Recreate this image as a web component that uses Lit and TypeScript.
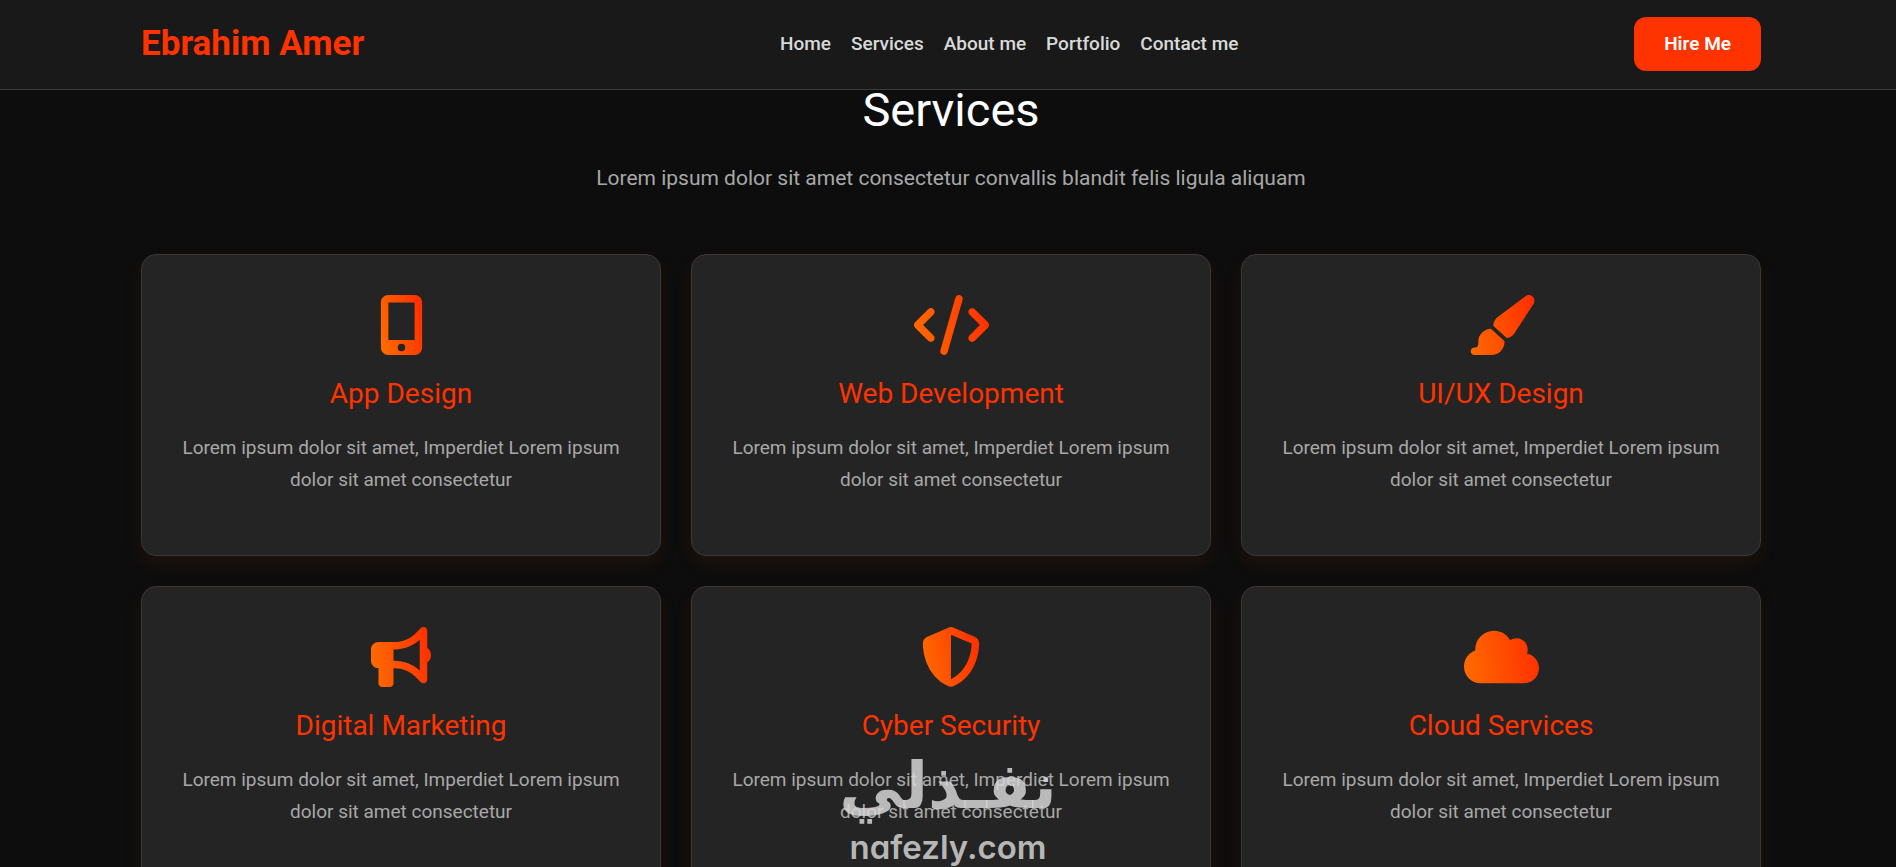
import { LitElement, html, css, svg } from "lit";
import { customElement, property } from "lit/decorators.js";

interface Icon {
  width: number;
  path: string;
}

const ICONS: Record<string, Icon> = {
  mobile: {
    width: 384,
    path: "M16 64C16 28.7 44.7 0 80 0H304c35.3 0 64 28.7 64 64V448c0 35.3-28.7 64-64 64H80c-35.3 0-64-28.7-64-64V64zM224 448a32 32 0 1 0 -64 0 32 32 0 1 0 64 0zM304 64H80V384H304V64z",
  },
  code: {
    width: 640,
    path: "M392.8 1.2c-17-4.9-34.7 5-39.6 22l-128 448c-4.9 17 5 34.7 22 39.6s34.7-5 39.6-22l128-448c4.9-17-5-34.7-22-39.6zm80.6 120.1c-12.5 12.5-12.5 32.8 0 45.3L562.7 256l-89.4 89.4c-12.5 12.5-12.5 32.8 0 45.3s32.8 12.5 45.3 0l112-112c12.5-12.5 12.5-32.8 0-45.3l-112-112c-12.5-12.5-32.8-12.5-45.3 0zm-306.7 0c-12.5-12.5-32.8-12.5-45.3 0l-112 112c-12.5 12.5-12.5 32.8 0 45.3l112 112c12.5 12.5 32.8 12.5 45.3 0s12.5-32.8 0-45.3L77.3 256l89.4-89.4c12.5-12.5 12.5-32.8 0-45.3z",
  },
  brush: {
    width: 576,
    path: "M339.3 367.1c27.3-3.9 51.9-19.4 67.2-42.9L568.2 74.1c12.6-19.5 9.4-45.3-7.6-61.2S517.7-4.4 499.1 9.6L262.4 187.2c-24 18-38.2 46.1-38.4 76.1L339.3 367.1zm-19.6 25.4l-116-104.4C143.9 290.3 96 339.6 96 400c0 3.9 .2 7.8 .6 11.6C98.4 429.1 86.4 448 68.8 448H64c-17.7 0-32 14.3-32 32s14.3 32 32 32H208c61.9 0 112-50.1 112-112c0-2.5-.1-5-.2-7.5z",
  },
  bullhorn: {
    width: 512,
    path: "M480 32c0-12.9-7.8-24.6-19.8-29.6s-25.7-2.2-34.9 6.9L381.7 53c-48 48-113.1 75-181 75H192 160 64c-35.3 0-64 28.7-64 64v96c0 35.3 28.7 64 64 64l0 128c0 17.7 14.3 32 32 32h64c17.7 0 32-14.3 32-32V352l8.7 0c67.9 0 133 27 181 75l43.6 43.6c9.2 9.2 22.9 11.9 34.9 6.9s19.8-16.6 19.8-29.6V300.4c18.6-8.8 32-32.5 32-60.4s-13.4-51.6-32-60.4V32zm-64 76.7V240 371.3C357.2 317.8 280.5 288 200.7 288H192V192h8.7c79.8 0 156.5-29.8 215.3-83.3z",
  },
  shield: {
    width: 512,
    path: "M256 0c4.6 0 9.2 1 13.4 2.9L457.7 82.8c22 9.3 38.4 31 38.3 57.2c-.5 99.2-41.3 280.7-213.6 363.2c-16.7 8-36.1 8-52.8 0C57.3 420.7 16.5 239.2 16 140c-.1-26.2 16.3-47.9 38.3-57.2L242.7 2.9C246.8 1 251.4 0 256 0zm0 66.8V444.8C394 378 431.1 230.1 432 141.4L256 66.8l0 0z",
  },
  cloud: {
    width: 640,
    path: "M0 336c0 79.5 64.5 144 144 144H512c70.7 0 128-57.3 128-128c0-61.9-44-113.6-102.4-125.4c4.1-10.7 6.4-22.4 6.4-34.6c0-53-43-96-96-96c-19.7 0-38.1 6-53.3 16.2C367 64.2 315.3 32 256 32C167.6 32 96 103.6 96 192c0 2.7 .1 5.4 .2 8.1C40.2 219.8 0 273.2 0 336z",
  },
};

const SERVICES = [
  { icon: "mobile", title: "App Design" },
  { icon: "code", title: "Web Development" },
  { icon: "brush", title: "UI/UX Design" },
  { icon: "bullhorn", title: "Digital Marketing" },
  { icon: "shield", title: "Cyber Security" },
  { icon: "cloud", title: "Cloud Services" },
];

const BLURB =
  "Lorem ipsum dolor sit amet, Imperdiet Lorem ipsum dolor sit amet consectetur";

@customElement("service-card")
class ServiceCard extends LitElement {
  static styles = css`
    :host {
      display: flex;
      flex-direction: column;
      align-items: center;
      padding: 40px;
      border: 1px solid #3b3835;
      border-radius: 15px;
      background: #242424;
      box-shadow: 0 8px 20px rgba(255, 102, 0, 0.07);
      text-align: center;
    }
    .icon {
      display: block;
      height: 60px;
    }
    .title {
      margin: 20px 0 19px;
      font-size: 28px;
      font-weight: 400;
      line-height: 38px;
      color: #ff3300;
    }
    .text {
      margin: 0 0 19px;
      font-size: 19px;
      line-height: 32px;
      color: #a8a8a8;
    }
  `;

  @property() icon = "mobile";
  @property() heading = "";
  @property() text = "";

  render() {
    const { width, path } = ICONS[this.icon];
    return html`
      <svg class="icon" viewBox="0 0 ${width} 512" aria-hidden="true">
        <defs>
          ${svg`<linearGradient id="flame" gradientUnits="userSpaceOnUse"
            x1="0" y1="300" x2="${width}" y2="212">
            <stop offset="0" stop-color="#ff6a00"></stop>
            <stop offset="1" stop-color="#ff3000"></stop>
          </linearGradient>`}
        </defs>
        <path fill="url(#flame)" d=${path}></path>
      </svg>
      <h3 class="title">${this.heading}</h3>
      <p class="text">${this.text}</p>
    `;
  }
}

@customElement("app-root")
class AppRoot extends LitElement {
  static styles = css`
    :host {
      position: relative;
      display: block;
      height: 100vh;
      overflow: hidden;
      background: #0d0d0d;
      color: #ffffff;
      font-family: Roboto, "Liberation Sans", sans-serif;
    }
    .header {
      padding-left: 6px;
      border-bottom: 1px solid #3c3c3c;
      background: #191919;
    }
    .container {
      width: calc(100% - 40px);
      max-width: 1620px;
      margin: 0 auto;
    }
    .bar {
      display: flex;
      align-items: center;
      justify-content: space-between;
      padding: 17px 0 18px;
    }
    .logo {
      font-size: 35px;
      font-weight: 700;
      line-height: 48px;
      color: #ff3300;
      text-decoration: none;
    }
    .nav {
      display: flex;
      gap: 20px;
      padding-left: 20px;
    }
    .link {
      font-size: 19px;
      font-weight: 500;
      line-height: 32px;
      color: #d9d9d9;
      text-decoration: none;
    }
    .hire {
      padding: 11px 30px;
      border: 0;
      border-radius: 12px;
      background: #ff3300;
      color: #ffffff;
      font-family: inherit;
      font-size: 19px;
      font-weight: 600;
      line-height: 32px;
    }
    .main {
      padding: 0 0 60px 6px;
    }
    .heading {
      margin: 0 0 32px;
      font-size: 47px;
      font-weight: 400;
      line-height: 40px;
      text-align: center;
    }
    .lead {
      margin: 0 0 60px;
      font-size: 21px;
      line-height: 32px;
      color: #a8a8a8;
      text-align: center;
    }
    .grid {
      display: grid;
      grid-template-columns: repeat(3, 1fr);
      gap: 30px;
    }
    .watermark {
      position: absolute;
      bottom: 0;
      left: 0;
      right: 0;
      display: flex;
      flex-direction: column;
      align-items: center;
      gap: 8px;
      color: rgba(216, 216, 216, 0.84);
      pointer-events: none;
    }
    .arabic {
      font-family: "DejaVu Sans", sans-serif;
      font-size: 64px;
      font-weight: 700;
      line-height: 66px;
    }
    .latin {
      font-family: Inter, sans-serif;
      font-size: 33px;
      font-weight: 600;
      font-feature-settings: "cv11";
      line-height: 40px;
    }
  `;

  render() {
    return html`
      <header class="header">
        <div class="container bar">
          <a class="logo" href="#home">Ebrahim Amer</a>
          <nav class="nav">
            <a class="link" href="#home">Home</a>
            <a class="link" href="#services">Services</a>
            <a class="link" href="#about">About me</a>
            <a class="link" href="#portfolio">Portfolio</a>
            <a class="link" href="#contact">Contact me</a>
          </nav>
          <button class="hire" type="button">Hire Me</button>
        </div>
      </header>
      <main class="main">
        <section class="container" id="services">
          <h2 class="heading">Services</h2>
          <p class="lead">
            Lorem ipsum dolor sit amet consectetur convallis blandit felis ligula aliquam
          </p>
          <div class="grid">
            ${SERVICES.map(
              (s) => html`<service-card
                icon=${s.icon}
                heading=${s.title}
                text=${BLURB}
              ></service-card>`
            )}
          </div>
        </section>
      </main>
      <div class="watermark">
        <span class="arabic" lang="ar" dir="rtl">نفـذلي</span>
        <span class="latin">nafezly.com</span>
      </div>
    `;
  }
}
